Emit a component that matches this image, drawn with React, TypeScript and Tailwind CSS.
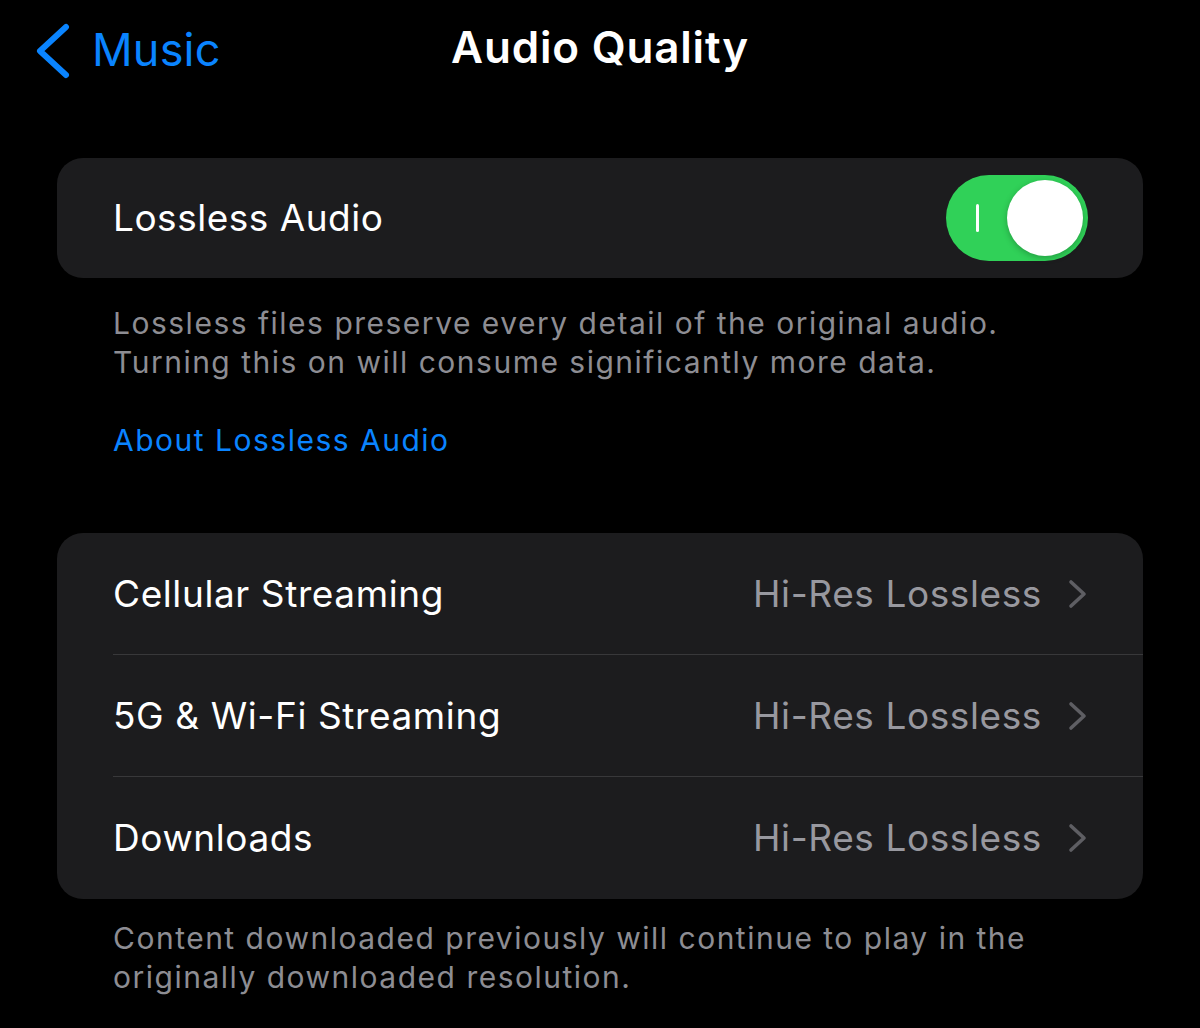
const rows = [
  { label: "Cellular Streaming", value: "Hi-Res Lossless" },
  { label: "5G & Wi-Fi Streaming", value: "Hi-Res Lossless" },
  { label: "Downloads", value: "Hi-Res Lossless" },
];

const BackChevron = () => (
  <svg width="36" height="56" viewBox="0 0 36 56" fill="none">
    <polyline
      points="31,4 5,28 31,52"
      stroke="currentColor"
      strokeWidth="6"
      strokeLinecap="round"
      strokeLinejoin="round"
    />
  </svg>
);

const RowChevron = () => (
  <svg width="20" height="30" viewBox="0 0 20 30" fill="none" className="text-[#5e5e63]">
    <polyline
      points="3,3 16,15 3,27"
      stroke="currentColor"
      strokeWidth="3.6"
      strokeLinecap="round"
      strokeLinejoin="round"
    />
  </svg>
);

export default function App() {
  return (
    <div
      className="min-h-[1028px] w-[1200px] bg-black text-white overflow-hidden"
      style={{ fontFamily: "Inter, 'Noto Sans', sans-serif" }}
    >
      {/* nav bar */}
      <div className="relative h-[96px] flex items-center justify-center">
        <div className="absolute left-[35px] top-[18px] flex items-center text-[#0a84ff]">
          <BackChevron />
          <span className="text-[45px] ml-[21px] -mt-[2px] tracking-[0.2px]">Music</span>
        </div>
        <h1 className="text-[44px] font-semibold tracking-[0.8px] -mt-[2px]">Audio Quality</h1>
      </div>

      <div className="px-[57px] pt-[62px]">
        {/* lossless toggle card */}
        <div className="bg-[#1c1c1e] rounded-[26px] h-[120px] flex items-center justify-between pl-[56px] pr-[55px]">
          <span className="text-[37px] tracking-[0.5px]">Lossless Audio</span>
          <div className="w-[142px] h-[86px] rounded-full bg-[#30d158] flex items-center justify-between pl-[30px] pr-[5px]">
            <div className="w-[3px] h-[28px] bg-white rounded-full" />
            <div className="w-[76px] h-[76px] rounded-full bg-white shadow-[0_2px_6px_rgba(0,0,0,0.25)]" />
          </div>
        </div>

        <div className="pl-[56px] pt-[26px] text-[30px] leading-[39px] text-[#8d8d93] tracking-[1.5px]">
          <p>Lossless files preserve every detail of the original audio.</p>
          <p>Turning this on will consume significantly more data.</p>
          <p className="text-[#0a84ff] mt-[39px]">About Lossless Audio</p>
        </div>

        {/* streaming card */}
        <div className="mt-[73px] bg-[#1c1c1e] rounded-[26px]">
          {rows.map((row, i) => (
            <div key={row.label} className="pl-[56px]">
              <div
                className={`h-[122px] flex items-center justify-between pr-[55px] ${
                  i !== rows.length - 1 ? "border-b border-[#38383a]" : ""
                }`}
              >
                <span className="text-[37px] tracking-[0.6px]">{row.label}</span>
                <div className="flex items-center gap-[26px]">
                  <span className="text-[37px] text-[#98989f] tracking-[0.6px]">{row.value}</span>
                  <RowChevron />
                </div>
              </div>
            </div>
          ))}
        </div>

        <div className="pl-[56px] pt-[20px] text-[30px] leading-[39px] text-[#8d8d93] tracking-[1.5px]">
          <p>Content downloaded previously will continue to play in the</p>
          <p>originally downloaded resolution.</p>
        </div>
      </div>
    </div>
  );
}
